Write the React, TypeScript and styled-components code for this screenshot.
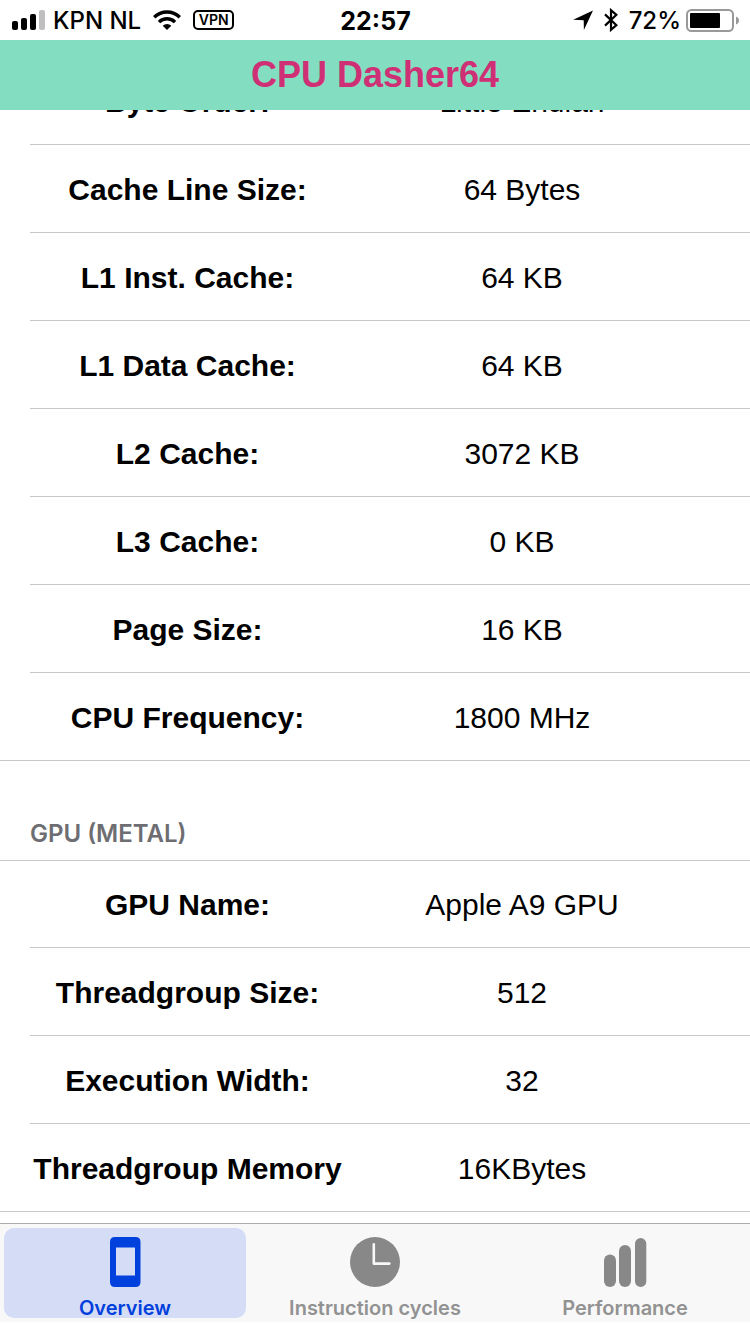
import React, { useLayoutEffect, useRef, useState } from 'react';
import styled, { createGlobalStyle } from 'styled-components';

const uiFont = 'Inter, "Liberation Sans", sans-serif';
const textFont = '"Liberation Sans", Arial, sans-serif';
const line = '#c8c7cc';

const GlobalStyle = createGlobalStyle`
  *, *::before, *::after { box-sizing: border-box; }
  body { margin: 0; background: #fff; color: #000; font-family: ${textFont}; }
`;

const Screen = styled.div`
  display: flex;
  flex-direction: column;
  height: 100vh;
  padding-bottom: 12px;
`;

const StatusBar = styled.header`
  display: grid;
  grid-template-columns: 1fr auto 1fr;
  align-items: center;
  flex: none;
  height: 40px;
  padding: 0 11px 0 12px;
  font: 500 24px/30px ${uiFont};
`;

const StatusGroup = styled.div<{ $end?: boolean }>`
  display: flex;
  align-items: center;
  justify-content: ${(p) => (p.$end ? 'flex-end' : 'flex-start')};
  gap: ${(p) => (p.$end ? '11px' : '12px')};
  white-space: nowrap;
`;

const StatusPair = styled.div<{ $gap: number }>`
  display: flex;
  align-items: center;
  gap: ${(p) => p.$gap}px;
`;

const StatusText = styled.span`
  padding-top: 2px;
`;

const Clock = styled.time`
  padding-top: 2px;
  font-size: 25px;
  font-weight: 700;
`;

const VpnBadge = styled.span`
  width: 41px;
  height: 20px;
  border: 2px solid #000;
  border-radius: 5px;
  font: 600 14px/16px ${uiFont};
  text-align: center;
`;

const TitleBar = styled.h1`
  flex: none;
  margin: 0;
  background: #83dec1;
  color: #cf3075;
  font: 700 36px/70px ${textFont};
  text-align: center;
`;

const Scroller = styled.main`
  flex: 1;
  min-height: 0;
  overflow-y: auto;
  scrollbar-width: none;
  padding-bottom: 11px;
`;

const Group = styled.section`
  border-bottom: 1px solid ${line};
`;

const GroupTitle = styled.h2`
  margin: 0;
  padding: 58px 30px 11px;
  border-bottom: 1px solid ${line};
  color: #6d6d72;
  font: 600 24px/30px ${uiFont};
  text-transform: uppercase;
`;

const SpecTable = styled.table<{ $titled: boolean }>`
  width: calc(100% - 30px);
  margin: ${(p) => (p.$titled ? '-1px' : '0')} 0 0 30px;
  border-spacing: 0;
  table-layout: fixed;
  font-size: 30px;
  line-height: 34px;
`;

const SpecRow = styled.tr`
  height: 88px;
  & > * {
    padding: 2px 0 0;
    border-bottom: 1px solid ${line};
    text-align: center;
    white-space: nowrap;
  }
  &:last-child { height: 87px; }
  &:last-child > * { border-bottom: 0; }
`;

const SpecName = styled.th`
  width: calc(100% * 7 / 16);
  font-weight: 700;
`;

const SpecValue = styled.td`
  && { padding-right: 51px; }
`;

const TabBar = styled.nav`
  display: grid;
  grid-template-columns: repeat(3, 1fr);
  flex: none;
  height: 99px;
  padding: 4px 0;
  border-top: 1px solid #acacac;
  background: #f8f8f8;
`;

const TabButton = styled.button<{ $active: boolean }>`
  display: flex;
  flex-direction: column;
  align-items: center;
  gap: 11px;
  margin: 0 4px;
  padding: 9px 0 0;
  border: 0;
  border-radius: 10px;
  background: ${(p) => (p.$active ? '#d5dcf5' : 'transparent')};
  color: ${(p) => (p.$active ? '#0040dd' : '#929292')};
  font: 600 20px/20px ${uiFont};
  white-space: nowrap;
  cursor: pointer;
`;

const groups = [
  {
    title: '',
    rows: [
      ['Byte Order:', 'Little Endian'],
      ['Cache Line Size:', '64 Bytes'],
      ['L1 Inst. Cache:', '64 KB'],
      ['L1 Data Cache:', '64 KB'],
      ['L2 Cache:', '3072 KB'],
      ['L3 Cache:', '0 KB'],
      ['Page Size:', '16 KB'],
      ['CPU Frequency:', '1800 MHz'],
    ],
  },
  {
    title: 'GPU (Metal)',
    rows: [
      ['GPU Name:', 'Apple A9 GPU'],
      ['Threadgroup Size:', '512'],
      ['Execution Width:', '32'],
      ['Threadgroup Memory', '16KBytes'],
    ],
  },
];

const SignalIcon = () => (
  <svg width="33" height="20" viewBox="0 0 33 20" aria-hidden="true">
    <rect x="0" y="11" width="6" height="9" rx="2" />
    <rect x="9" y="8" width="6" height="12" rx="2" />
    <rect x="18" y="4" width="6" height="16" rx="2" />
    <rect x="27" y="0" width="6" height="20" rx="2" fill="#bfbfbf" />
  </svg>
);

const WifiIcon = () => (
  <svg width="28" height="20" viewBox="0 0 28 20" aria-hidden="true">
    <path d="M1.200 7.200a18.200 18.200 0 0 1 25.600 0M6 12.100a11.400 11.400 0 0 1 16 0" fill="none" stroke="#000" strokeWidth="3.400" />
    <path d="M14 20l-4.300-4.300a6.200 6.200 0 0 1 8.600 0z" />
  </svg>
);

const LocationIcon = () => (
  <svg width="20" height="20" viewBox="0 0 20 20" aria-hidden="true">
    <path d="M20 .6L10.900 20l-.2-9.800L.2 9.800z" />
  </svg>
);

const BluetoothIcon = () => (
  <svg width="14" height="24" viewBox="0 0 14 24" aria-hidden="true">
    <path d="M1 6.400l11.400 10.800L7 21.800V2.200l5.400 4.600L1 17.600" fill="none" stroke="#000" strokeWidth="2.200" />
  </svg>
);

const BatteryIcon = () => (
  <svg width="53" height="24" viewBox="0 0 53 24" aria-hidden="true">
    <rect x="1" y="2" width="46" height="21" rx="4.500" fill="none" stroke="#999" strokeWidth="2" />
    <rect x="4" y="5" width="30" height="15" rx="1" />
    <path d="M50 8.500q3 1.200 3 4t-3 4z" fill="#999" />
  </svg>
);

const PhoneIcon = () => (
  <svg width="50" height="50" viewBox="0 0 50 50" aria-hidden="true">
    <path fill="#0040dd" fillRule="evenodd" d="M15 0h20.500q5 0 5 5v40q0 5-5 5H15q-5 0-5-5V5q0-5 5-5zM16 10.500v28h19v-28z" />
  </svg>
);

const ClockIcon = () => (
  <svg width="50" height="50" viewBox="0 0 50 50" aria-hidden="true">
    <circle cx="25" cy="25" r="25" fill="#888" />
    <path d="M23.800 7.200v19.400h15.600" fill="none" stroke="#f8f8f8" strokeWidth="2.600" strokeLinecap="round" strokeLinejoin="round" />
  </svg>
);

const BarsIcon = () => (
  <svg width="50" height="50" viewBox="0 0 50 50" aria-hidden="true" fill="#888">
    <rect x="4" y="17.500" width="12" height="32.500" rx="6" />
    <rect x="19" y="8" width="12" height="42" rx="6" />
    <rect x="35" y="1" width="11.300" height="49" rx="5.600" />
  </svg>
);

const tabs = [
  { name: 'Overview', Icon: PhoneIcon },
  { name: 'Instruction cycles', Icon: ClockIcon },
  { name: 'Performance', Icon: BarsIcon },
];

export default function App() {
  const [active, setActive] = useState('Overview');
  const scroller = useRef<HTMLElement>(null);

  // The overview opens scrolled to its last row.
  useLayoutEffect(() => {
    if (scroller.current) scroller.current.scrollTop = scroller.current.scrollHeight;
  }, []);

  return (
    <Screen>
      <GlobalStyle />
      <StatusBar>
        <StatusGroup>
          <StatusPair $gap={8}>
            <SignalIcon />
            <StatusText>KPN NL</StatusText>
          </StatusPair>
          <WifiIcon />
          <VpnBadge>VPN</VpnBadge>
        </StatusGroup>
        <Clock>22:57</Clock>
        <StatusGroup $end>
          <LocationIcon />
          <BluetoothIcon />
          <StatusPair $gap={5}>
            <StatusText>72%</StatusText>
            <BatteryIcon />
          </StatusPair>
        </StatusGroup>
      </StatusBar>
      <TitleBar>CPU Dasher64</TitleBar>
      <Scroller ref={scroller}>
        {groups.map(({ title, rows }) => (
          <Group key={title}>
            {title && <GroupTitle>{title}</GroupTitle>}
            <SpecTable $titled={title !== ''}>
              <tbody>
                {rows.map(([name, value]) => (
                  <SpecRow key={name}>
                    <SpecName scope="row">{name}</SpecName>
                    <SpecValue>{value}</SpecValue>
                  </SpecRow>
                ))}
              </tbody>
            </SpecTable>
          </Group>
        ))}
      </Scroller>
      <TabBar>
        {tabs.map(({ name, Icon }) => (
          <TabButton
            key={name}
            type="button"
            $active={active === name}
            aria-current={active === name ? 'page' : undefined}
            onClick={() => setActive(name)}
          >
            <Icon />
            {name}
          </TabButton>
        ))}
      </TabBar>
    </Screen>
  );
}
